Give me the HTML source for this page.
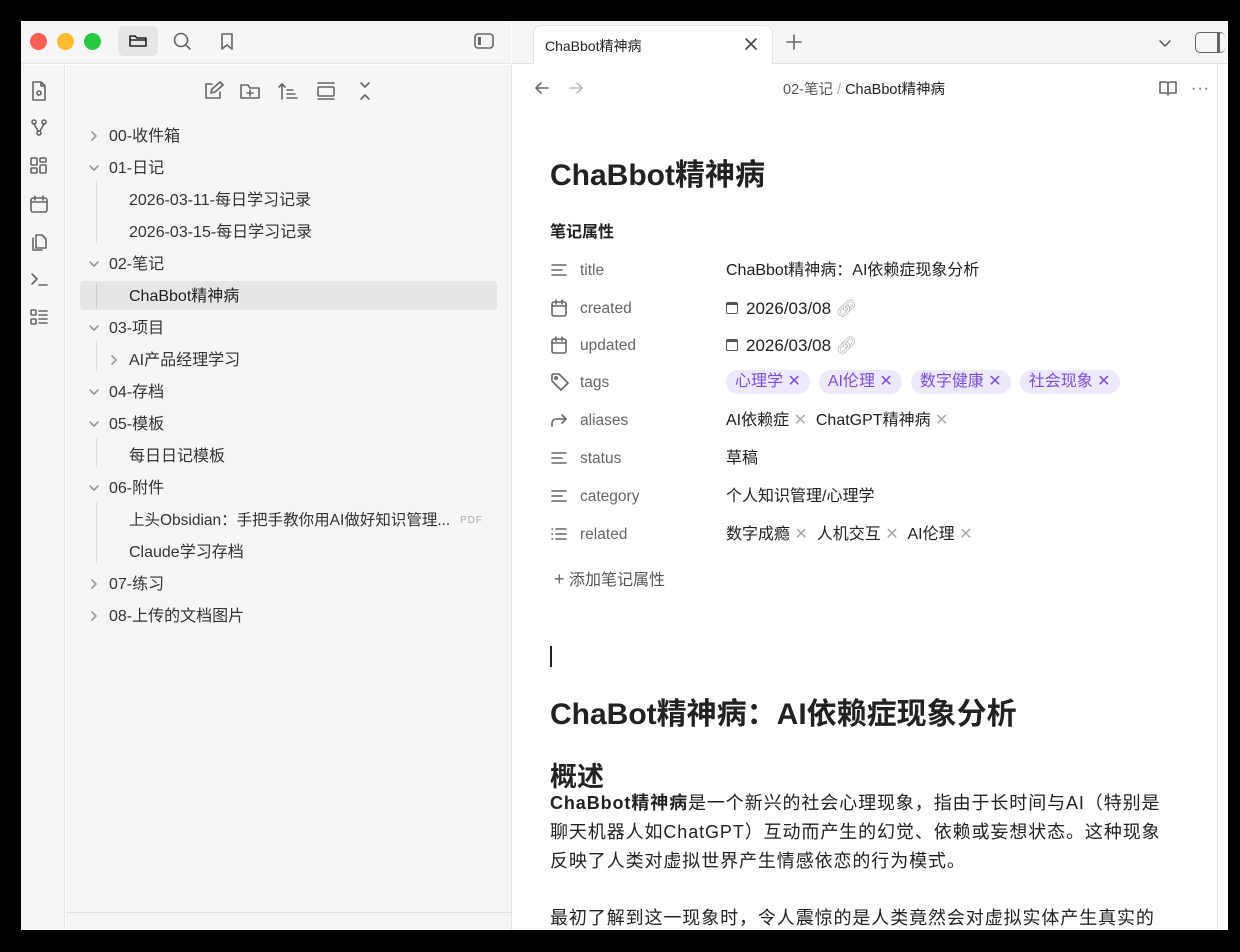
<!DOCTYPE html>
<html><head><meta charset="utf-8"><style>
*{box-sizing:border-box;margin:0;padding:0}
body{width:1240px;height:952px;background:#000;font-family:"Liberation Sans","Noto Sans CJK SC",sans-serif;color:#222;position:relative;overflow:hidden}
.a{position:absolute}
.win{left:21px;top:21px;width:1207px;height:909px;background:#fff;overflow:hidden}
svg{fill:none;stroke:#666;stroke-width:1.6;stroke-linecap:round;stroke-linejoin:round}
.t{font-size:16px;color:#333;white-space:nowrap;line-height:20px;margin-top:2px}
.cv{position:absolute;width:12px;height:12px}
.pl{font-size:15.5px;color:#666;line-height:20px}
.pv{font-size:16px;color:#222;white-space:nowrap;line-height:20px}
.tag{display:inline-block;background:#eee8fb;color:#7a4fd8;border-radius:12px;padding:2px 9px;margin-right:9px;font-size:16px}
.x{color:#aaa}
</style></head><body>
<div class="a win">
 <div class="a" style="left:0;top:0;width:490px;height:43px;background:#f6f6f6;border-bottom:1px solid #e6e6e6"></div>
 <div class="a" style="left:9px;top:12px;width:17px;height:17px;border-radius:50%;background:#fe5f57"></div>
 <div class="a" style="left:36px;top:12px;width:17px;height:17px;border-radius:50%;background:#febc2e"></div>
 <div class="a" style="left:63px;top:12px;width:17px;height:17px;border-radius:50%;background:#28c840"></div>
 <div class="a" style="left:97px;top:5px;width:40px;height:30px;border-radius:6px;background:#e6e6e6"></div>
 <svg class="a" style="left:107px;top:10px" width="20" height="20" viewBox="0 0 20 20"><path d="M2 5v10h16V7H9L7 5z M2 9h16" stroke="#222"/></svg>
 <svg class="a" style="left:151px;top:10px" width="20" height="20" viewBox="0 0 20 20"><circle cx="9" cy="9" r="6.5"/><path d="M14 14l4 4"/></svg>
 <svg class="a" style="left:196px;top:10px" width="20" height="20" viewBox="0 0 20 20"><path d="M5 3h10v15l-5-4-5 4z"/></svg>
 <svg class="a" style="left:452px;top:10px" width="22" height="20" viewBox="0 0 22 20"><rect x="2" y="3" width="18" height="14" rx="3"/><rect x="5" y="6" width="3" height="8" fill="#666" stroke="none"/></svg>
 <div class="a" style="left:0;top:44px;width:44px;height:865px;background:#f6f6f6;border-right:1px solid #e3e3e3"></div>
 <svg class="a" style="left:8px;top:59px" width="20" height="22" viewBox="0 0 20 22"><path d="M4 2h8l4 4v14H4z M12 2v4h4"/><circle cx="10" cy="13" r="2"/></svg>
 <svg class="a" style="left:8px;top:97px" width="20" height="20" viewBox="0 0 20 20"><circle cx="5" cy="4" r="2"/><circle cx="15" cy="4" r="2"/><circle cx="10" cy="15" r="2"/><path d="M5 6l4 7M15 6l-4 7"/></svg>
 <svg class="a" style="left:8px;top:135px" width="20" height="20" viewBox="0 0 20 20"><rect x="2" y="2" width="6" height="7" rx="1"/><rect x="11" y="2" width="6" height="4" rx="1"/><rect x="2" y="12" width="6" height="5" rx="1"/><rect x="11" y="9" width="6" height="8" rx="1"/></svg>
 <svg class="a" style="left:8px;top:173px" width="20" height="20" viewBox="0 0 20 20"><rect x="2" y="4" width="16" height="14" rx="2"/><path d="M2 8h16M6 2v4M14 2v4"/></svg>
 <svg class="a" style="left:8px;top:210px" width="20" height="22" viewBox="0 0 20 22"><path d="M7 4h6l4 4v9H7z M4 7v12h9"/></svg>
 <svg class="a" style="left:8px;top:248px" width="20" height="20" viewBox="0 0 20 20"><path d="M3 5l5 5-5 5M10 16h8"/></svg>
 <svg class="a" style="left:8px;top:286px" width="20" height="20" viewBox="0 0 20 20"><rect x="2" y="3" width="5" height="5" rx="1"/><rect x="2" y="12" width="5" height="5" rx="1"/><path d="M10 4h8M10 8h8M10 12h8M10 16h8"/></svg>
 <div class="a" style="left:45px;top:44px;width:446px;height:865px;background:#f6f6f6;border-right:1px solid #e3e3e3"></div>
 <div class="a" style="left:45px;top:891px;width:445px;height:1px;background:#e3e3e3"></div>
 <svg class="a" style="left:181px;top:59px" width="22" height="22" viewBox="0 0 22 22"><path d="M10 4H4v14h14v-6 M9 13l1-4 8-7 3 3-8 7z"/></svg>
 <svg class="a" style="left:218px;top:59px" width="22" height="22" viewBox="0 0 22 22"><path d="M2 5v13h18V8h-9L9 5z M11 10v6M8 13h6"/></svg>
 <svg class="a" style="left:256px;top:59px" width="22" height="22" viewBox="0 0 22 22"><path d="M5 19V4M2 7l3-3 3 3M10 10h6M10 14h8M10 18h10"/></svg>
 <svg class="a" style="left:294px;top:59px" width="22" height="22" viewBox="0 0 22 22"><path d="M3 3h16M3 19h16"/><rect x="3" y="7" width="16" height="9" rx="1"/></svg>
 <svg class="a" style="left:333px;top:59px" width="22" height="22" viewBox="0 0 22 22"><path d="M7 3l4 4 4-4M7 19l4-4 4 4"/></svg>

 <div class="a" style="left:59px;top:260px;width:417px;height:29px;background:#e6e6e6;border-radius:4px"></div>
 <div class="a" style="left:75px;top:160px;width:1px;height:62px;background:#ddd"></div>
 <div class="a" style="left:75px;top:262px;width:1px;height:26px;background:#ccc"></div>
 <div class="a" style="left:75px;top:320px;width:1px;height:30px;background:#ddd"></div>
 <div class="a" style="left:75px;top:417px;width:1px;height:30px;background:#ddd"></div>
 <div class="a" style="left:75px;top:481px;width:1px;height:62px;background:#ddd"></div>

 <svg class="cv" style="left:67px;top:109px" viewBox="0 0 12 12"><path d="M4 2l4 4-4 4" stroke="#999"/></svg><div class="a t" style="left:88px;top:104px">00-收件箱</div>
 <svg class="cv" style="left:67px;top:141px" viewBox="0 0 12 12"><path d="M2 4l4 4 4-4" stroke="#999"/></svg><div class="a t" style="left:88px;top:136px">01-日记</div>
 <div class="a t" style="left:108px;top:168px">2026-03-11-每日学习记录</div>
 <div class="a t" style="left:108px;top:200px">2026-03-15-每日学习记录</div>
 <svg class="cv" style="left:67px;top:237px" viewBox="0 0 12 12"><path d="M2 4l4 4 4-4" stroke="#999"/></svg><div class="a t" style="left:88px;top:232px">02-笔记</div>
 <div class="a t" style="left:108px;top:264px;color:#222">ChaBbot精神病</div>
 <svg class="cv" style="left:67px;top:301px" viewBox="0 0 12 12"><path d="M2 4l4 4 4-4" stroke="#999"/></svg><div class="a t" style="left:88px;top:296px">03-项目</div>
 <svg class="cv" style="left:87px;top:333px" viewBox="0 0 12 12"><path d="M4 2l4 4-4 4" stroke="#999"/></svg><div class="a t" style="left:108px;top:328px">AI产品经理学习</div>
 <svg class="cv" style="left:67px;top:365px" viewBox="0 0 12 12"><path d="M2 4l4 4 4-4" stroke="#999"/></svg><div class="a t" style="left:88px;top:360px">04-存档</div>
 <svg class="cv" style="left:67px;top:397px" viewBox="0 0 12 12"><path d="M2 4l4 4 4-4" stroke="#999"/></svg><div class="a t" style="left:88px;top:392px">05-模板</div>
 <div class="a t" style="left:108px;top:424px">每日日记模板</div>
 <svg class="cv" style="left:67px;top:461px" viewBox="0 0 12 12"><path d="M2 4l4 4 4-4" stroke="#999"/></svg><div class="a t" style="left:88px;top:456px">06-附件</div>
 <div class="a t" style="left:108px;top:488px;font-size:15.5px">上头Obsidian：手把手教你用AI做好知识管理...</div>
 <div class="a" style="left:439px;top:494px;font-size:10px;color:#aaa;letter-spacing:1px">PDF</div>
 <div class="a t" style="left:108px;top:520px">Claude学习存档</div>
 <svg class="cv" style="left:67px;top:557px" viewBox="0 0 12 12"><path d="M4 2l4 4-4 4" stroke="#999"/></svg><div class="a t" style="left:88px;top:552px">07-练习</div>
 <svg class="cv" style="left:67px;top:589px" viewBox="0 0 12 12"><path d="M4 2l4 4-4 4" stroke="#999"/></svg><div class="a t" style="left:88px;top:584px">08-上传的文档图片</div>

 <div class="a" style="left:491px;top:0;width:716px;height:43px;background:#f6f6f6;border-bottom:1px solid #e3e3e3"></div>
 <div class="a" style="left:512px;top:4px;width:240px;height:40px;background:#fff;border:1px solid #e3e3e3;border-bottom:none;border-radius:8px 8px 0 0"></div>
 <div class="a" style="left:524px;top:15px;font-size:14px;color:#222">ChaBbot精神病</div>
 <svg class="a" style="left:723px;top:16px" width="14" height="14" viewBox="0 0 14 14"><path d="M2 2l10 10M12 2L2 12" stroke="#444"/></svg>
 <svg class="a" style="left:764px;top:12px" width="18" height="18" viewBox="0 0 18 18"><path d="M9 2v14M2 9h14"/></svg>
 <svg class="a" style="left:1137px;top:15px" width="14" height="14" viewBox="0 0 14 14"><path d="M2 5l5 5 5-5"/></svg>
 <div class="a" style="left:1174px;top:11px;width:30px;height:21px;border:1.6px solid #666;border-radius:5px;border-right:none"></div>
 <div class="a" style="left:1196px;top:11px;width:3px;height:21px;background:#666"></div>
 <svg class="a" style="left:512px;top:58px" width="18" height="18" viewBox="0 0 18 18"><path d="M15 9H3M8 4L3 9l5 5"/></svg>
 <svg class="a" style="left:546px;top:58px" width="18" height="18" viewBox="0 0 18 18"><path d="M3 9h12M10 4l5 5-5 5" stroke="#bbb"/></svg>
 <div class="a" style="left:762px;top:57px;font-size:14.5px;color:#555">02-笔记 <span style="color:#aaa">/</span> <span style="color:#222">ChaBbot精神病</span></div>
 <svg class="a" style="left:1137px;top:58px" width="20" height="18" viewBox="0 0 20 18"><path d="M2 3h6a2 2 0 0 1 2 2v11a2 2 0 0 0-2-2H2z M18 3h-6a2 2 0 0 0-2 2v11a2 2 0 0 1 2-2h6z"/></svg>
 <div class="a" style="left:1170px;top:62px;font-size:16px;line-height:12px;color:#555;letter-spacing:1px">···</div>
 <div class="a" style="left:1196px;top:44px;width:1px;height:865px;background:#e6e6e6"></div>

 <div class="a" style="left:529px;top:129px;font-size:30px;font-weight:bold;color:#222">ChaBbot精神病</div>
 <div class="a" style="left:529px;top:197px;font-size:16px;font-weight:bold;color:#222">笔记属性</div>
 <svg class="a" style="left:529px;top:240px" width="18" height="18" viewBox="0 0 18 18"><path d="M2 4h14M2 9h10M2 14h14"/></svg>
 <svg class="a" style="left:529px;top:277px" width="18" height="20" viewBox="0 0 18 20"><rect x="2" y="4" width="14" height="14" rx="2"/><path d="M2 8h14M6 2v4M12 2v4"/></svg>
 <svg class="a" style="left:529px;top:314px" width="18" height="20" viewBox="0 0 18 20"><rect x="2" y="4" width="14" height="14" rx="2"/><path d="M2 8h14M6 2v4M12 2v4"/></svg>
 <svg class="a" style="left:529px;top:351px" width="20" height="20" viewBox="0 0 20 20"><path d="M2 3v6l9 9 7-7-9-9H3z"/><circle cx="6" cy="6" r="1.2"/></svg>
 <svg class="a" style="left:529px;top:390px" width="18" height="18" viewBox="0 0 18 18"><path d="M2 15v-3a4 4 0 0 1 4-4h10M12 4l4 4-4 4"/></svg>
 <svg class="a" style="left:529px;top:428px" width="18" height="18" viewBox="0 0 18 18"><path d="M2 4h14M2 9h10M2 14h14"/></svg>
 <svg class="a" style="left:529px;top:466px" width="18" height="18" viewBox="0 0 18 18"><path d="M2 4h14M2 9h10M2 14h14"/></svg>
 <svg class="a" style="left:529px;top:504px" width="18" height="18" viewBox="0 0 18 18"><path d="M6 4h10M6 9h10M6 14h10M2 4h.5M2 9h.5M2 14h.5"/></svg>
 <div class="a pl" style="left:559px;top:240px">title</div>
 <div class="a pl" style="left:559px;top:278px">created</div>
 <div class="a pl" style="left:559px;top:315px">updated</div>
 <div class="a pl" style="left:559px;top:352px">tags</div>
 <div class="a pl" style="left:559px;top:390px">aliases</div>
 <div class="a pl" style="left:559px;top:428px">status</div>
 <div class="a pl" style="left:559px;top:466px">category</div>
 <div class="a pl" style="left:559px;top:504px">related</div>

 <div class="a pv" style="left:705px;top:240px">ChaBbot精神病：AI依赖症现象分析</div>
 <div class="a pv" style="left:705px;top:278px;font-size:17px"><span style="display:inline-block;width:12px;height:12px;border:1.5px solid #555;border-top-width:3px;border-radius:2px;margin-right:8px"></span>2026/03/08 <span class="x">🔗︎</span></div>
 <div class="a pv" style="left:705px;top:315px;font-size:17px"><span style="display:inline-block;width:12px;height:12px;border:1.5px solid #555;border-top-width:3px;border-radius:2px;margin-right:8px"></span>2026/03/08 <span class="x">🔗︎</span></div>
 <div class="a pv" style="left:705px;top:349px"><span class="tag">心理学 ✕</span><span class="tag">AI伦理 ✕</span><span class="tag">数字健康 ✕</span><span class="tag">社会现象 ✕</span></div>
 <div class="a pv" style="left:705px;top:390px">AI依赖症 <span class="x">✕</span>&nbsp; ChatGPT精神病 <span class="x">✕</span></div>
 <div class="a pv" style="left:705px;top:428px">草稿</div>
 <div class="a pv" style="left:705px;top:466px">个人知识管理/心理学</div>
 <div class="a pv" style="left:705px;top:504px">数字成瘾 <span class="x">✕</span>&nbsp; 人机交互 <span class="x">✕</span>&nbsp; AI伦理 <span class="x">✕</span></div>
 <div class="a" style="left:533px;top:545px;font-size:16px;color:#555"><span style="font-size:18px;color:#666">+</span> 添加笔记属性</div>

 <div class="a" style="left:529px;top:625px;width:1.5px;height:21px;background:#222"></div>
 <div class="a" style="left:529px;top:668px;font-size:30px;font-weight:bold;color:#222">ChaBot精神病：AI依赖症现象分析</div>
 <div class="a" style="left:529px;top:734px;font-size:27px;font-weight:bold;color:#222">概述</div>
 <div class="a" style="left:529px;top:768px;font-size:18px;letter-spacing:0.9px;line-height:29px;color:#222;white-space:nowrap">
  <b>ChaBbot精神病</b>是一个新兴的社会心理现象，指由于长时间与AI（特别是<br>聊天机器人如ChatGPT）互动而产生的幻觉、依赖或妄想状态。这种现象<br>反映了人类对虚拟世界产生情感依恋的行为模式。
 </div>
 <div class="a" style="left:529px;top:883px;font-size:18px;letter-spacing:0.9px;line-height:29px;color:#222;white-space:nowrap">最初了解到这一现象时，令人震惊的是人类竟然会对虚拟实体产生真实的</div>
</div>
</body></html>
